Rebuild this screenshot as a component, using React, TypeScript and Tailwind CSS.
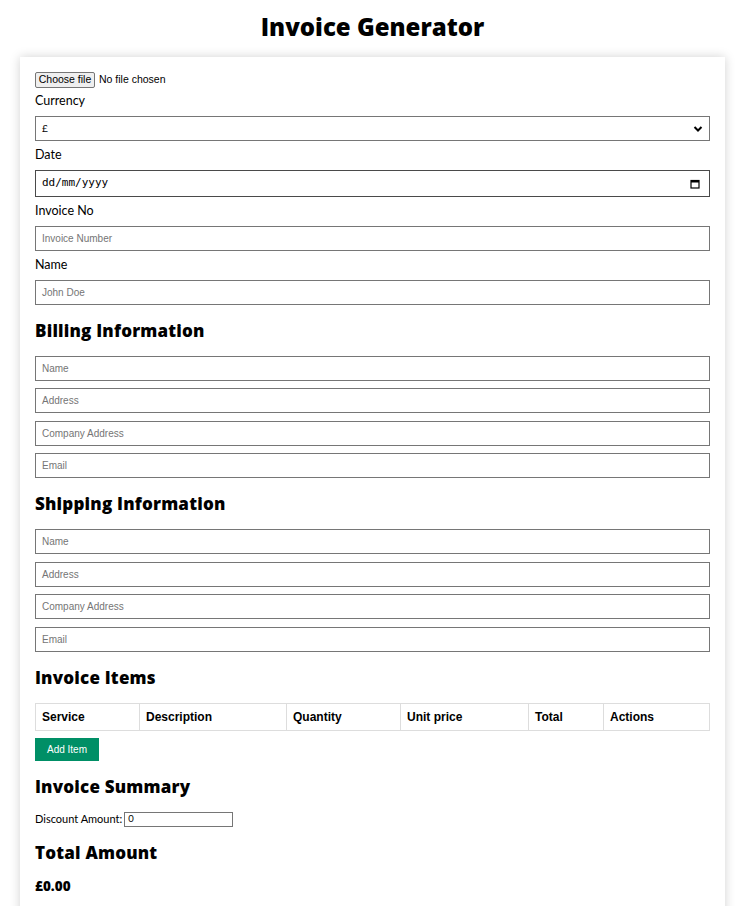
import React from "react";

const gill = { fontFamily: "Lato, 'Noto Sans', sans-serif" } as React.CSSProperties;
const head = { fontFamily: "'Open Sans', Lato, sans-serif" } as React.CSSProperties;

function TextBox({ placeholder, className = "" }: { placeholder: string; className?: string }) {
  return (
    <div
      className={`h-[25px] border border-[#767676] flex items-center pl-[6px] text-[10px] text-[#757575] ${className}`}
      style={{ fontFamily: "'Liberation Sans', Arial, sans-serif" }}
    >
      {placeholder}
    </div>
  );
}

function Label({ children, className = "" }: { children: React.ReactNode; className?: string }) {
  return (
    <div className={`h-[18px] leading-[18px] text-[12.5px] text-black ${className}`} style={gill}>
      {children}
    </div>
  );
}

function Heading({ children, className = "" }: { children: React.ReactNode; className?: string }) {
  return (
    <div className={`h-[24px] leading-[24px] text-[17px] font-extrabold tracking-[0.2px] text-black ${className}`} style={head}>
      {children}
    </div>
  );
}

export default function App() {
  const arial = { fontFamily: "'Liberation Sans', Arial, sans-serif" } as React.CSSProperties;
  const cols = [
    { name: "Service", w: 103 },
    { name: "Description", w: 147 },
    { name: "Quantity", w: 114 },
    { name: "Unit price", w: 128 },
    { name: "Total", w: 75 },
    { name: "Actions", w: 108 },
  ];
  return (
    <div className="bg-white min-h-[906px] w-[745px] overflow-hidden">
      <div className="pt-[12px] pb-[15px] h-[57px] text-center text-[24px] leading-[30px] font-extrabold text-black" style={head}>
        Invoice Generator
      </div>
      <div className="mx-[20px] w-[705px] bg-white shadow-[0_0_10px_rgba(0,0,0,0.18)] px-[15px] pt-[15px] pb-[40px]">
        {/* file input */}
        <div className="h-[16px] flex items-center text-[10.5px] text-black" style={arial}>
          <div className="h-[16px] w-[60px] border border-[#767676] rounded-[2px] bg-[#efefef] flex items-center justify-center">
            Choose file
          </div>
          <span className="ml-[4px]">No file chosen</span>
        </div>
        <Label className="mt-[4px]">Currency</Label>
        <div className="mt-[6px] h-[25px] border border-[#767676] flex items-center justify-between pl-[6px] pr-[6px] text-[10px] text-black" style={gill}>
          <span>£</span>
          <svg width="10" height="8" viewBox="0 0 10 8">
            <path d="M1.5 2 L5 5.5 L8.5 2" fill="none" stroke="#000" strokeWidth="2" />
          </svg>
        </div>
        <Label className="mt-[5px]">Date</Label>
        <div className="mt-[6px] h-[27px] border border-[#4a4a4a] flex items-center justify-between pl-[6px] pr-[9px] text-[11px] text-black" style={{ fontFamily: "'DejaVu Sans Mono', monospace" }}>
          <span>dd/mm/yyyy</span>
          <svg width="10" height="10" viewBox="0 0 10 10">
            <rect x="1" y="1.5" width="8" height="7.5" fill="none" stroke="#000" strokeWidth="1.2" />
            <rect x="1" y="1.5" width="8" height="2" fill="#000" />
          </svg>
        </div>
        <Label className="mt-[5px]">Invoice No</Label>
        <TextBox className="mt-[6px]" placeholder="Invoice Number" />
        <Label className="mt-[5px]">Name</Label>
        <TextBox className="mt-[6px]" placeholder="John Doe" />

        <Heading className="mt-[14px]">Billing Information</Heading>
        <TextBox className="mt-[13px]" placeholder="Name" />
        <TextBox className="mt-[7px]" placeholder="Address" />
        <TextBox className="mt-[8px]" placeholder="Company Address" />
        <TextBox className="mt-[7px]" placeholder="Email" />

        <Heading className="mt-[14px]">Shipping Information</Heading>
        <TextBox className="mt-[13px]" placeholder="Name" />
        <TextBox className="mt-[8px]" placeholder="Address" />
        <TextBox className="mt-[7px]" placeholder="Company Address" />
        <TextBox className="mt-[8px]" placeholder="Email" />

        <Heading className="mt-[14px]">Invoice Items</Heading>
        <div className="mt-[13px] flex h-[28px] border border-[#dddddd]" style={arial}>
          {cols.map((c, i) => (
            <div
              key={c.name}
              className={`flex items-center pl-[6px] text-[12px] font-bold text-black ${i > 0 ? "border-l border-[#dddddd]" : ""}`}
              style={{ width: i === cols.length - 1 ? undefined : c.w, flex: i === cols.length - 1 ? 1 : undefined }}
            >
              {c.name}
            </div>
          ))}
        </div>
        <div className="mt-[7px] h-[23px] w-[64px] bg-[#008f66] text-white text-[10px] flex items-center justify-center" style={arial}>
          Add Item
        </div>

        <Heading className="mt-[14px]">Invoice Summary</Heading>
        <div className="mt-[13px] h-[15px] flex items-center text-[11px] text-black" style={gill}>
          <span>Discount Amount:</span>
          <div className="ml-[2px] h-[15px] w-[109px] border border-[#767676] flex items-center pl-[3px] text-[9.5px]" style={gill}>
            0
          </div>
        </div>

        <Heading className="mt-[14px]">Total Amount</Heading>
        <div className="mt-[12px] h-[18px] leading-[18px] text-[13.5px] font-extrabold text-black" style={head}>
          £0.00
        </div>
      </div>
    </div>
  );
}
